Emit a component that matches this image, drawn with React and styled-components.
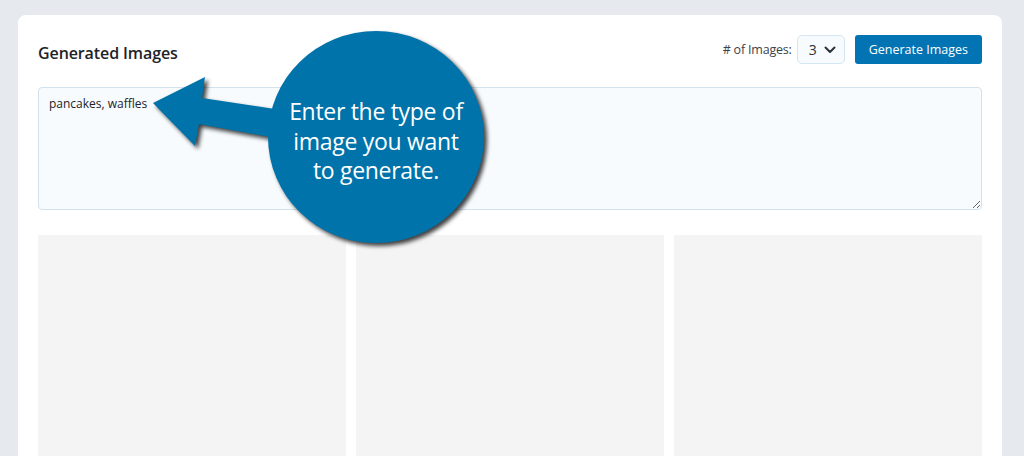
import styled, { createGlobalStyle } from "styled-components";

const GlobalStyle = createGlobalStyle`
  html, body {
    margin: 0;
    padding: 0;
    background: #e6eaee;
    font-family: "Open Sans", "Noto Sans", sans-serif;
    overflow: hidden;
  }
`;

const Page = styled.div`
  padding: 15px 22px 0 18px;
  height: 456px;
  box-sizing: border-box;
  overflow: hidden;
`;

const Card = styled.div`
  position: relative;
  background: #fff;
  border-radius: 8px 8px 0 0;
  padding: 20px 20px 0;
  height: 441px;
  box-sizing: border-box;
  overflow: hidden;
`;

const Header = styled.div`
  display: flex;
  align-items: center;
  justify-content: space-between;
  height: 29px;
`;

const Title = styled.h2`
  margin: 0;
  margin-top: 7px;
  font-size: 16px;
  font-weight: 600;
  letter-spacing: -0.1px;
  color: #1d2327;
`;

const Controls = styled.div`
  display: flex;
  align-items: center;
`;

const Label = styled.span`
  font-size: 12.5px;
  color: #3c434a;
  margin-right: 5px;
  letter-spacing: -0.2px;
`;

const Select = styled.div`
  display: flex;
  align-items: center;
  gap: 7px;
  height: 29px;
  box-sizing: border-box;
  padding: 0 8px 0 11px;
  border: 1px solid #d4e6f1;
  border-radius: 5px;
  background: #f7fbfe;
  font-size: 14px;
  color: #2c3338;
  margin-right: 10px;
`;

const Button = styled.button`
  height: 29px;
  padding: 0 14px;
  border: none;
  border-radius: 3px;
  background: #0274b3;
  color: #fff;
  font-family: inherit;
  font-size: 12.5px;
`;

const Prompt = styled.textarea`
  display: block;
  width: 100%;
  height: 123px;
  margin-top: 23px;
  box-sizing: border-box;
  padding: 7px 10px;
  border: 1px solid #d3e2ec;
  border-radius: 4px;
  background: #f7fbfe;
  font-family: inherit;
  font-size: 12px;
  color: #1d2327;
  resize: vertical;
  outline: none;
`;

const Grid = styled.div`
  display: grid;
  grid-template-columns: repeat(3, 1fr);
  gap: 10px;
  margin-top: 25px;
`;

const Tile = styled.div`
  height: 260px;
  background: #f4f4f4;
`;

const Callout = styled.div`
  position: absolute;
  left: 130px;
  top: 10px;
  width: 380px;
  height: 240px;
  pointer-events: none;
`;

const Shape = styled.svg`
  position: absolute;
  left: 0;
  top: 0;
  filter: drop-shadow(3px 3px 2px rgba(0, 0, 0, 0.75));
`;

const CalloutText = styled.div`
  position: absolute;
  left: 120px;
  top: 72px;
  width: 216px;
  text-align: center;
  color: #fff;
  font-size: 23px;
  line-height: 29.5px;
  letter-spacing: -0.3px;
`;

function Chevron() {
  return (
    <svg width="12" height="8" viewBox="0 0 12 8">
      <path d="M1.5 1.5 L6 6 L10.5 1.5" fill="none" stroke="#2c3338" strokeWidth="2" strokeLinecap="round" strokeLinejoin="round" />
    </svg>
  );
}

export default function App() {
  return (
    <>
      <GlobalStyle />
      <Page>
        <Card>
          <Header>
            <Title>Generated Images</Title>
            <Controls>
              <Label># of Images:</Label>
              <Select>
                3 <Chevron />
              </Select>
              <Button>Generate Images</Button>
            </Controls>
          </Header>
          <Prompt defaultValue="pancakes, waffles" spellCheck={false} />
          <Grid>
            <Tile />
            <Tile />
            <Tile />
          </Grid>
          <Callout>
            <Shape width="380" height="240" viewBox="0 0 380 240">
              <g transform="translate(-148,-25)" fill="#0073aa">
                <path d="M153 103 L205 77 L202 98 L275 109 L275 138 L199 124 L195 146 Z" />
                <ellipse cx="376" cy="137" rx="108" ry="106" />
              </g>
            </Shape>
            <CalloutText>
              Enter the type of
              <br />
              image you want
              <br />
              to generate.
            </CalloutText>
          </Callout>
        </Card>
      </Page>
    </>
  );
}
